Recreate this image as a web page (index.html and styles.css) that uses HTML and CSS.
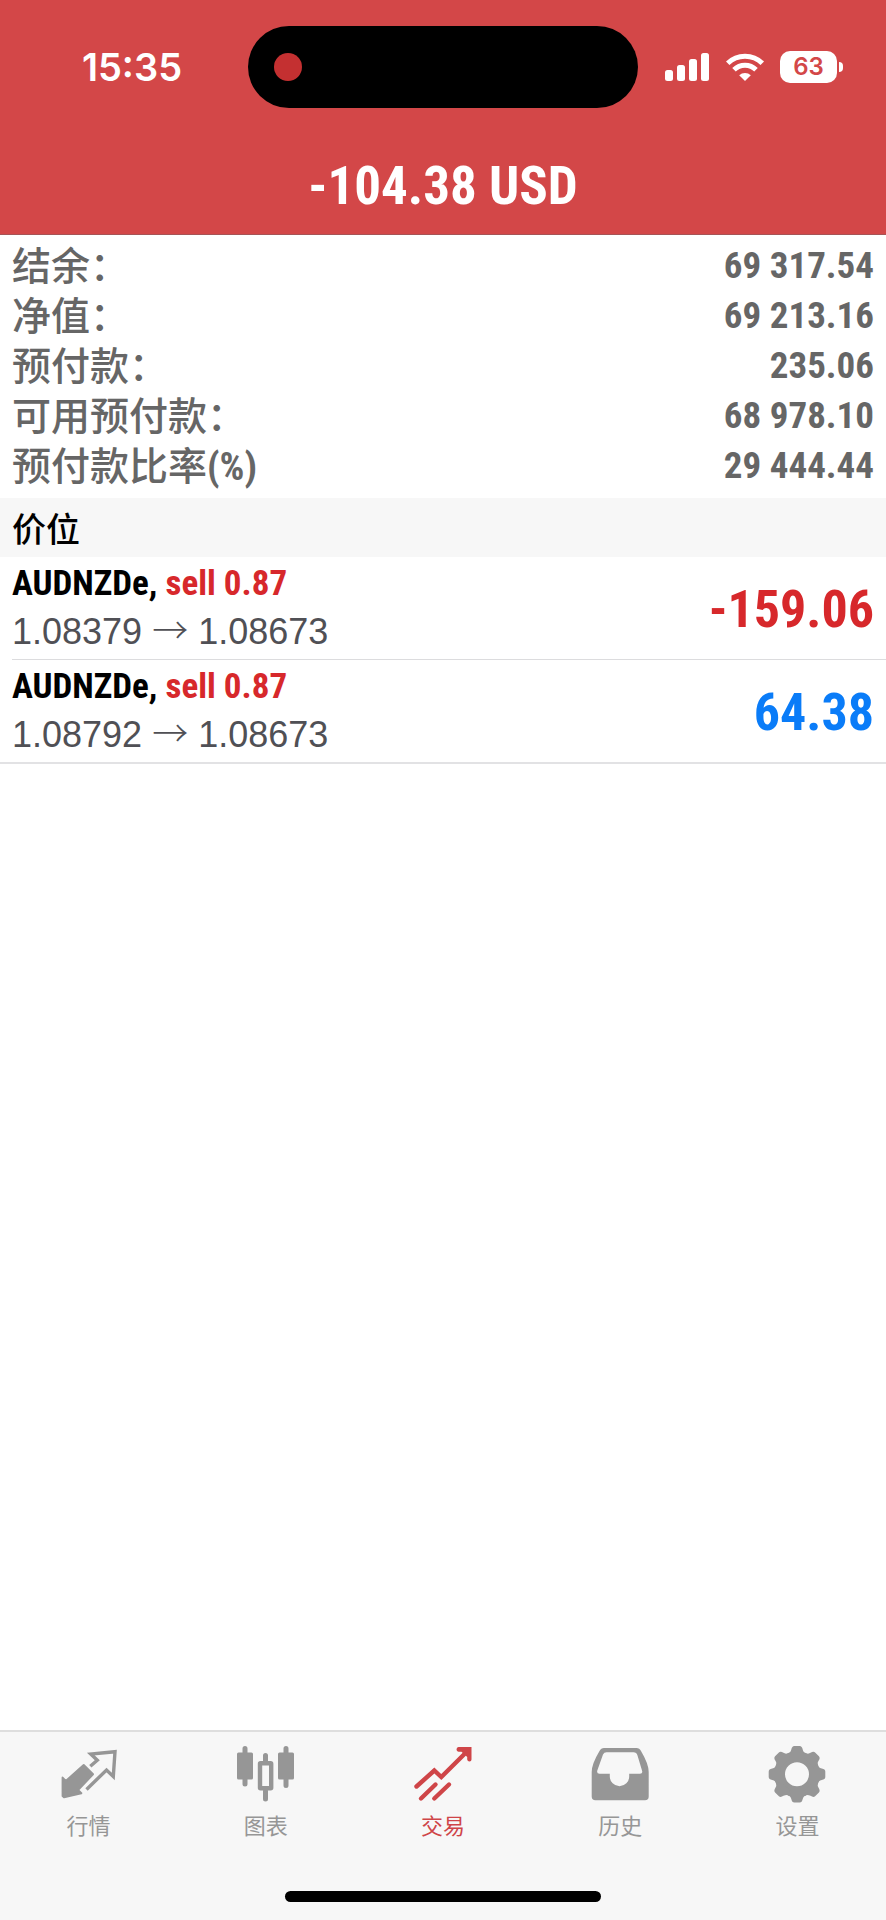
FILE: index.html
```
<!DOCTYPE html>
<html lang="zh-CN">
<head>
<meta charset="utf-8">
<meta name="viewport" content="width=device-width, initial-scale=1">
<title>交易</title>
<link rel="stylesheet" href="styles.css">
</head>
<body>
<header class="header">
  <div class="status">
    <time class="clock">15:35</time>
    <div class="island"><span class="rec-dot"></span></div>
    <div class="indicators">
      <svg class="signal" viewBox="0 0 45 28" aria-hidden="true">
        <rect x="0" y="17" width="8" height="11" rx="2.5"/>
        <rect x="12" y="12" width="8" height="16" rx="2.5"/>
        <rect x="24" y="6" width="8" height="22" rx="2.5"/>
        <rect x="36" y="0" width="8" height="28" rx="2.5"/>
      </svg>
      <svg class="wifi" viewBox="0 0 38 28" aria-hidden="true">
        <path class="wifi-arc" d="M1.7 10.3A24.6 24.6 0 0 1 36.3 10.3"/>
        <path class="wifi-arc" d="M8 16.8A15.7 15.7 0 0 1 30 16.8"/>
        <path d="M13.2 22.2A8.6 8.6 0 0 1 24.8 22.2L19 28Z"/>
      </svg>
      <div class="battery"><span class="battery-level">63</span><span class="battery-nub"></span></div>
    </div>
  </div>
  <h1 class="total">-104.38 USD</h1>
</header>

<main class="main">
  <dl class="account">
    <div class="account-row"><dt>结余：</dt><dd>69 317.54</dd></div>
    <div class="account-row"><dt>净值：</dt><dd>69 213.16</dd></div>
    <div class="account-row"><dt>预付款：</dt><dd>235.06</dd></div>
    <div class="account-row"><dt>可用预付款：</dt><dd>68 978.10</dd></div>
    <div class="account-row"><dt>预付款比率<span class="unit">(%)</span></dt><dd>29 444.44</dd></div>
  </dl>
  <h2 class="section">价位</h2>
  <ul class="positions">
    <li class="position">
      <div class="deal">
        <p class="symbol">AUDNZDe, <span class="side">sell 0.87</span></p>
        <p class="prices">1.08379 <span class="arrow">→</span> 1.08673</p>
      </div>
      <strong class="profit loss">-159.06</strong>
    </li>
    <li class="position">
      <div class="deal">
        <p class="symbol">AUDNZDe, <span class="side">sell 0.87</span></p>
        <p class="prices">1.08792 <span class="arrow">→</span> 1.08673</p>
      </div>
      <strong class="profit gain">64.38</strong>
    </li>
  </ul>
</main>

<footer class="footer">
  <nav class="tabs">
    <a class="tab" href="#quotes">
      <svg class="icon" viewBox="0 0 60 60" aria-hidden="true">
        <path class="solid round" d="M3.6 33.6L6.8 37L24.7 21L34 30.3L19 46L22.3 49.3L5 53.2L3.6 52Z"/>
        <path class="line" stroke-width="3.4" d="M31.3 22.3L38.3 16.2L31.8 10L56 7.7L54.3 32.5L47.5 26L27.5 45.5"/>
      </svg>
      <span>行情</span>
    </a>
    <a class="tab" href="#chart">
      <svg class="icon" viewBox="0 0 60 60" aria-hidden="true">
        <rect class="solid" x="1" y="8.5" width="16" height="27" rx="1.5"/>
        <rect class="solid" x="42" y="8.5" width="16" height="27" rx="1.5"/>
        <path class="line cap" stroke-width="5" d="M9 4.500V40M50 4.500V41.500M29.500 11.500V17M29.500 47V55"/>
        <rect class="line" stroke-width="4.400" x="24" y="19.200" width="11.200" height="25" rx="0.500"/>
      </svg>
      <span>图表</span>
    </a>
    <a class="tab active" href="#trade" aria-current="page">
      <svg class="icon" viewBox="0 0 60 60" aria-hidden="true">
        <path class="line cap" stroke-width="4.400" d="M3.500 42.500L21.300 26.500L28.300 33L54 7.500"/>
        <path class="line cap" stroke-width="4.400" d="M8 54.500L22.500 40.500M21.300 54.500L36 40.500"/>
        <path class="solid" d="M45.500 3H58.500V15.500Q58.500 17.500 56.500 17.500T54.200 15.500V13L48.500 7.800H45.500Q43.500 7.300 43.500 5.400T45.500 3Z"/>
      </svg>
      <span>交易</span>
    </a>
    <a class="tab" href="#history">
      <svg class="icon" viewBox="0 0 60 60" aria-hidden="true">
        <path class="solid" fill-rule="evenodd" d="M14 4H46.500Q49.500 4 51 7Q58.700 20 58.700 28V52.500Q58.700 56.300 55 56.300H5.500Q1.700 56.300 1.700 52.500V28Q1.700 20 9.500 7Q11 4 14 4ZM16.500 8.300Q14 8.300 13 10.500L7.300 26.500Q6.500 29.700 9.500 29.700H19.800V32.500A9.700 9.700 0 0 0 39.200 32.500V29.700H50Q53 29.700 52 26.500L47.500 11.500Q46.500 8.300 43.500 8.300Z"/>
      </svg>
      <span>历史</span>
    </a>
    <a class="tab" href="#settings">
      <svg class="icon" viewBox="0 0 60 60" aria-hidden="true">
        <defs><path id="tooth" d="M19.500 10.500Q23.500 9 24.300 5.500Q25 2 27.300 2H32.700Q35 2 35.700 5.500Q36.500 9 40.500 10.500L36 14H24Z"/></defs>
        <circle class="line" stroke-width="11" cx="30" cy="30.300" r="17.500"/>
        <g class="solid">
          <use href="#tooth"/>
          <use href="#tooth" transform="rotate(45 30 30.300)"/>
          <use href="#tooth" transform="rotate(90 30 30.300)"/>
          <use href="#tooth" transform="rotate(135 30 30.300)"/>
          <use href="#tooth" transform="rotate(180 30 30.300)"/>
          <use href="#tooth" transform="rotate(225 30 30.300)"/>
          <use href="#tooth" transform="rotate(270 30 30.300)"/>
          <use href="#tooth" transform="rotate(315 30 30.300)"/>
        </g>
      </svg>
      <span>设置</span>
    </a>
  </nav>
  <div class="home-bar"></div>
</footer>
</body>
</html>
```
FILE: styles.css
```
:root {
  --red: #d34748;
  --narrow: "Roboto Condensed", "Liberation Sans Narrow", "Arial Narrow", "Liberation Sans", sans-serif;
  --cjk: "Noto Sans CJK SC", sans-serif;
}
* { box-sizing: border-box; margin: 0; padding: 0; }
body {
  display: flex;
  flex-direction: column;
  min-height: 100vh;
  background: #fff;
  color: #000;
  font-family: "Liberation Sans", "Noto Sans CJK SC", sans-serif;
}
.header {
  background: var(--red);
  border-bottom: 1px solid #a65456;
  color: #fff;
}
.status {
  display: grid;
  grid-template-columns: 1fr 390px 1fr;
  align-items: center;
  height: 134px;
}
.clock {
  padding-left: 16px;
  text-align: center;
  font: 600 38px/48px Inter, sans-serif;
}
.island {
  display: flex;
  align-items: center;
  height: 82px;
  padding-left: 26px;
  border-radius: 41px;
  background: #000;
}
.rec-dot {
  width: 28px;
  height: 28px;
  border-radius: 50%;
  background: #c43031;
}
.indicators {
  display: flex;
  justify-content: center;
  align-items: center;
  gap: 16px;
  padding-right: 16px;
  fill: #fff;
}
.signal { width: 45px; height: 28px; }
.wifi { width: 38px; height: 28px; }
.wifi-arc { fill: none; stroke: #fff; stroke-width: 5; }
.battery { display: flex; align-items: center; gap: 2px; }
.battery-level {
  width: 57px;
  border-radius: 10px;
  background: #fff;
  color: var(--red);
  text-align: center;
  font: 600 24px/32px Inter, sans-serif;
}
.battery-nub {
  width: 4px;
  height: 10px;
  border-radius: 0 4px 4px 0;
  background: #fff;
}
.total {
  padding-top: 4px;
  text-align: center;
  font: 700 53px/96px var(--narrow);
}
.main { flex: 1; }
.account { padding: 6px 12px 7px; color: #666; }
.account-row {
  display: flex;
  justify-content: space-between;
  align-items: flex-start;
  height: 50px;
}
.account dt { font: 500 39px/44px var(--cjk); }
.account dd { font: 700 37px/50px var(--narrow); }
.unit { font-family: var(--narrow); font-weight: 700; }
.section {
  padding: 0 12px;
  background: #f7f7f7;
  font: 500 34px/59px var(--cjk);
}
.positions {
  border-bottom: 2px solid #e2e2e4;
  list-style: none;
}
.position {
  display: flex;
  justify-content: space-between;
  align-items: center;
  margin-left: 12px;
  padding: 3px 12px 3px 0;
}
.position + .position { border-top: 1px solid #dcdcde; }
.symbol { font: 700 35px/48px var(--narrow); }
.side, .loss { color: #d7282b; }
.prices { color: #505055; font-size: 36px; line-height: 48px; }
.arrow { font-family: var(--cjk); font-weight: 300; line-height: 1; }
.profit { padding-top: 4px; font: 700 52px/92px var(--narrow); }
.gain { color: #0a7cf8; }
.footer {
  border-top: 2px solid #dedede;
  background: #f7f7f7;
}
.tabs { display: grid; grid-template-columns: repeat(5, 1fr); }
.tab {
  display: flex;
  flex-direction: column;
  align-items: center;
  gap: 4px;
  padding-top: 12px;
  color: #969696;
  font: 400 22px/32px var(--cjk);
  text-decoration: none;
}
.tab.active { color: #cf4548; }
.icon { width: 60px; height: 60px; }
.solid { fill: currentColor; }
.round { stroke: currentColor; stroke-width: 2; stroke-linejoin: round; }
.line { fill: none; stroke: currentColor; }
.cap { stroke-linecap: round; }
.home-bar {
  width: 316px;
  height: 11px;
  margin: 51px auto 18px;
  border-radius: 6px;
  background: #000;
}
```
